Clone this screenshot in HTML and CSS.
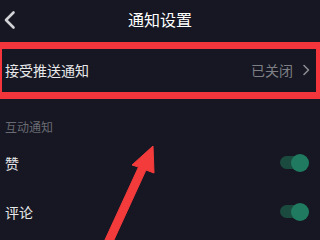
FILE: index.html
```html
<!DOCTYPE html>
<html lang="zh-CN">
<head>
  <meta charset="UTF-8">
  <meta name="viewport" content="width=device-width, initial-scale=1.0">
  <title>通知设置</title>
  <link rel="stylesheet" href="styles.css">
</head>
<body>

  <div class="page">
    <div class="header">
      <svg class="back" width="14" height="20" viewBox="0 0 14 20">
        <path d="M10.5 2.5 L3 10 L10.5 17.5" fill="none" stroke="#d2d3d6" stroke-width="2.6" stroke-linecap="round" stroke-linejoin="round"/>
      </svg>
      <h2>通知设置</h2>
    </div>

    <div class="row push">
      <span class="label">接受推送通知</span>
      <span class="value">已关闭</span>
      <svg class="chev" width="8" height="12" viewBox="0 0 8 12">
        <path d="M2 1.5 L6.5 6 L2 10.5" fill="none" stroke="#8a8b90" stroke-width="1.6" stroke-linecap="round" stroke-linejoin="round"/>
      </svg>
    </div>

    <div class="section-title">互动通知</div>

    <div class="row">
      <span class="label">赞</span>
      <span class="toggle"><span class="track"></span><span class="knob"></span></span>
    </div>

    <div class="row">
      <span class="label">评论</span>
      <span class="toggle"><span class="track"></span><span class="knob"></span></span>
    </div>
  </div>

  <!-- 标注：红框和箭头 -->
  <svg class="marks" width="320" height="240" viewBox="0 0 320 240">
    <path d="M0 42 H320 V99 H0 Z M2 49 V92 H316 V49 Z" fill="#f4353c" fill-rule="evenodd"/>
    <polygon points="153,146 154,173 146,170 113,242 104,242 138.5,167 132,165" fill="#f43b3b" stroke="#f43b3b" stroke-width="1" stroke-linejoin="round"/>
  </svg>

</body>
</html>
```

FILE: styles.css
```css
body {
  margin: 0;
  background-color: #161722;
  font-family: "Noto Sans CJK SC", "Noto Sans", sans-serif;
  color: #e8e8ea;
  overflow: hidden;
}

.page {
  width: 320px;
  height: 240px;
}

.header {
  height: 38px;
  display: flex;
  align-items: center;
  justify-content: center;
  position: relative;
}

.back {
  position: absolute;
  left: 3px;
  top: 10px;
}

h2 {
  margin: 0;
  font-size: 16px;
  font-weight: normal;
  color: #ffffff;
}

.row {
  height: 49px;
  display: flex;
  align-items: center;
  padding: 0 11px 0 5px;
}

.push {
  height: 64px;
  padding-right: 10px;
}

.label {
  flex: 1;
  font-size: 14px;
}

.value {
  font-size: 14px;
  color: #7e7f85;
  margin-right: 9px;
}

.chev {
  display: block;
}

.section-title {
  padding: 15px 5px 0;
  line-height: 20px;
  font-size: 12px;
  color: #6a6b72;
  margin-bottom: 1px;
}

.toggle {
  display: flex;
  align-items: center;
}

.track {
  width: 22px;
  height: 13px;
  border-radius: 7px;
  background-color: #1b4a3e;
}

.knob {
  width: 18px;
  height: 18px;
  border-radius: 50%;
  background-color: #1f7a60;
  margin-left: -11px;
}

.marks {
  position: absolute;
  left: 0;
  top: 0;
}
```
